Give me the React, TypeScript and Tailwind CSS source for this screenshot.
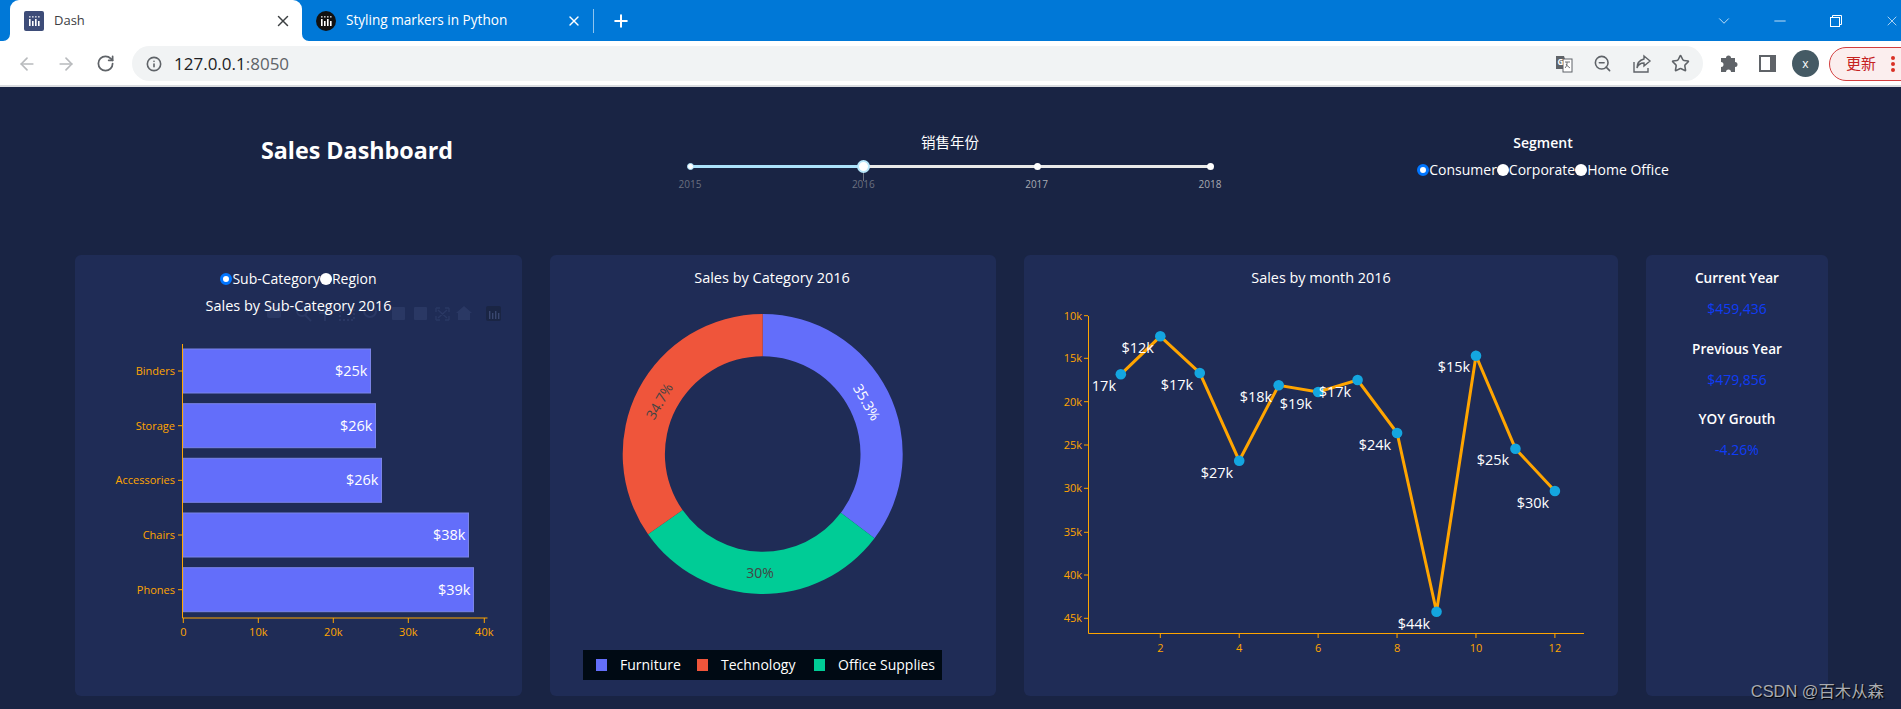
import React from "react";
import { ArrowLeft, ArrowRight, ChevronDown, Info, Minus, Plus, RotateCw, Star, X, ZoomOut } from "lucide-react";

const bars = [
  { name: "Binders", y: 349, right: 370.5, label: "$25k" },
  { name: "Storage", y: 403.7, right: 375.5, label: "$26k" },
  { name: "Accessories", y: 458.3, right: 381.5, label: "$26k" },
  { name: "Chairs", y: 513, right: 468.5, label: "$38k" },
  { name: "Phones", y: 567.7, right: 473.5, label: "$39k" },
];

const xTicks = [
  { x: 183.3, label: "0" },
  { x: 258.3, label: "10k" },
  { x: 333.3, label: "20k" },
  { x: 408.3, label: "30k" },
  { x: 484.3, label: "40k" },
];

const months = [
  { m: 1, y: 374.3, label: "17k", lx: 1091.8, ly: 390.5, start: true },
  { m: 2, y: 336.3, label: "$12k", lx: 1137.7, ly: 352.5 },
  { m: 3, y: 373, label: "$17k", lx: 1177, ly: 389.5 },
  { m: 4, y: 460.7, label: "$27k", lx: 1217, ly: 477.5 },
  { m: 5, y: 385.3, label: "$18k", lx: 1256, ly: 401.5 },
  { m: 6, y: 392, label: "$19k", lx: 1296, ly: 408.5 },
  { m: 7, y: 380, label: "$17k", lx: 1335, ly: 396.5 },
  { m: 8, y: 433, label: "$24k", lx: 1375, ly: 449.5 },
  { m: 9, y: 611.7, label: "$44k", lx: 1414, ly: 629 },
  { m: 10, y: 355.7, label: "$15k", lx: 1454, ly: 372 },
  { m: 11, y: 448.7, label: "$25k", lx: 1493, ly: 465 },
  { m: 12, y: 491, label: "$30k", lx: 1533, ly: 508 },
];

const monthX = (m: number) => 1160.3 + (m - 2) * 39.46;

const yTicks = [
  { y: 315.7, label: "10k" },
  { y: 358.3, label: "15k" },
  { y: 401.7, label: "20k" },
  { y: 445, label: "25k" },
  { y: 488.3, label: "30k" },
  { y: 532.3, label: "35k" },
  { y: 575, label: "40k" },
  { y: 618.3, label: "45k" },
];

const kpis = [
  { title: "Current Year", value: "$459,436" },
  { title: "Previous Year", value: "$479,856" },
  { title: "YOY Grouth", value: "-4.26%" },
];

function arc(r0: number, r1: number, from: number, to: number) {
  const cx = 762.7;
  const cy = 454;
  const pt = (r: number, a: number) => {
    const t = (a * Math.PI) / 180;
    return `${(cx + r * Math.sin(t)).toFixed(2)} ${(cy - r * Math.cos(t)).toFixed(2)}`;
  };
  const large = to - from > 180 ? 1 : 0;
  return `M${pt(r1, from)} A${r1} ${r1} 0 ${large} 1 ${pt(r1, to)} L${pt(r0, to)} A${r0} ${r0} 0 ${large} 0 ${pt(r0, from)} Z`;
}

function PlotlyBars({ color = "#fff" }: { color?: string }) {
  return (
    <g fill={color}>
      <rect x="5" y="8" width="1.6" height="7" />
      <rect x="8" y="10" width="1.6" height="5" />
      <rect x="11" y="8" width="1.6" height="7" />
      <rect x="14" y="10" width="1.6" height="5" />
      <rect x="5" y="5" width="1.6" height="1.6" opacity=".7" />
      <rect x="8" y="5" width="1.6" height="1.6" opacity=".7" />
      <rect x="11" y="5" width="1.6" height="1.6" opacity=".7" />
      <rect x="14" y="5" width="1.6" height="1.6" opacity=".7" />
    </g>
  );
}

function Radio({ checked, label }: { checked?: boolean; label: string }) {
  return (
    <label className="flex items-center">
      <span
        className={
          checked
            ? "w-[12px] h-[12px] rounded-full bg-white border-[3px] border-[#0075ff]"
            : "w-[12px] h-[12px] rounded-full bg-white"
        }
      />
      <span>{label}</span>
    </label>
  );
}

function BrowserBar() {
  return (
    <div className="flex flex-col bg-white">
      <div className="flex items-center h-[41px] bg-[#0078d7] text-[13px]">
        <div className="relative flex items-center ml-[10px] w-[292px] h-[41px] shrink-0 bg-white rounded-t-[9px] text-[#3c4043]">
          <svg className="absolute left-[-7px] bottom-0 w-[7px] h-[7px]" viewBox="0 0 7 7">
            <path d="M7 0v7H0a7 7 0 0 0 7-7z" fill="#fff" />
          </svg>
          <svg className="absolute right-[-7px] bottom-0 w-[7px] h-[7px]" viewBox="0 0 7 7">
            <path d="M0 0v7h7a7 7 0 0 1-7-7z" fill="#fff" />
          </svg>
          <svg className="ml-[14px] w-[20px] h-[20px]" viewBox="0 0 20 20">
            <rect width="20" height="20" rx="2" fill="#3d4c78" />
            <PlotlyBars />
          </svg>
          <span className="ml-[10px]">Dash</span>
          <X className="ml-auto mr-[10px] w-[18px] h-[18px] text-[#3c4043]" strokeWidth={2} />
        </div>
        <div className="flex items-center w-[292px] h-[41px] shrink-0 text-white text-[13.6px]">
          <svg className="ml-[14px] w-[20px] h-[20px]" viewBox="0 0 20 20">
            <circle cx="10" cy="10" r="10" fill="#111" />
            <PlotlyBars />
          </svg>
          <span className="ml-[10px]">Styling markers in Python</span>
          <X className="ml-auto mr-[11px] w-[16px] h-[16px]" strokeWidth={2} />
          <span className="w-px h-[24px] bg-[#8fc4ee]" />
        </div>
        <Plus className="ml-[17px] w-[20px] h-[20px] shrink-0 text-white" strokeWidth={2.4} />
        <ChevronDown className="ml-[1084px] w-[18px] h-[18px] shrink-0 text-white" strokeWidth={1} />
        <Minus className="ml-[38px] w-[18px] h-[18px] shrink-0 text-white" strokeWidth={1} />
        <svg className="ml-[41px] w-[12px] h-[12px] shrink-0" viewBox="0 0 12 12" fill="none" stroke="#fff">
          <rect x=".5" y="2.5" width="9" height="9" />
          <path d="M2.5 2.5v-2h9v9h-2" />
        </svg>
        <X className="ml-[42px] w-[16px] h-[16px] text-white shrink-0" strokeWidth={1} />
      </div>
      <div className="flex items-center h-[44px] pt-px">
        <ArrowLeft className="ml-[17px] w-[20px] h-[20px] shrink-0 text-[#b8babd]" strokeWidth={2} />
        <ArrowRight className="ml-[19px] w-[20px] h-[20px] shrink-0 text-[#b8babd]" strokeWidth={2} />
        <RotateCw className="ml-[20px] w-[19px] h-[19px] shrink-0 text-[#5f6368]" strokeWidth={2.2} />
        <div className="flex items-center ml-[17px] w-[1571px] h-[35px] shrink-0 rounded-full bg-[#f1f3f4]">
          <Info className="ml-[14px] w-[16px] h-[16px] text-[#5f6368]" strokeWidth={2.4} />
          <span className="ml-[12px] text-[17px] text-[#202124]">
            127.0.0.1<span className="text-[#5f6368]">:8050</span>
          </span>
          <svg className="ml-auto w-[18px] h-[18px]" viewBox="0 0 18 18">
            <path d="M1 1h8l1 3h0v10H1z" fill="#5f6368" />
            <rect x="8" y="4" width="9" height="13" fill="#fff" stroke="#5f6368" />
            <text x="2.5" y="10" fontSize="8" fontWeight="700" fill="#fff">G</text>
            <path d="M10 7h5M12 7c.4 3-1 5-2 6M11 9c1 2 3 3 4 4" stroke="#5f6368" fill="none" strokeWidth=".9" />
          </svg>
          <ZoomOut className="ml-[20px] w-[19px] h-[19px] text-[#5f6368]" strokeWidth={2} />
          <svg className="ml-[21px] w-[19px] h-[19px]" viewBox="0 0 19 19" fill="none" stroke="#5f6368" strokeWidth="1.4">
            <path d="M1 8v10h14v-4" />
            <path d="M11 2l6 5-6 5V9C7 9 5 11 4 14c0-5 3-8 7-9z" />
          </svg>
          <Star className="ml-[19px] mr-[13px] w-[19px] h-[19px] text-[#5f6368]" strokeWidth={2} />
        </div>
        <svg className="ml-[17px] w-[18px] h-[18px] shrink-0" viewBox="0 0 18 18" fill="#5f6368">
          <path d="M6 3a2.5 2.5 0 0 1 5 0h4v4a2.5 2.5 0 0 1 0 5v5h-4a2.5 2.5 0 0 0-5 0H1v-5a2.5 2.5 0 0 0 0-5V3z" />
        </svg>
        <svg className="ml-[21px] w-[17px] h-[17px] shrink-0" viewBox="0 0 17 17">
          <rect x="1" y="1" width="15" height="15" fill="none" stroke="#5f6368" strokeWidth="2" />
          <rect x="11" y="1" width="5" height="15" fill="#5f6368" />
        </svg>
        <span className="flex items-center justify-center ml-[16px] w-[27px] h-[27px] shrink-0 rounded-full bg-[#455a64] text-white text-[12px]">
          x
        </span>
        <div className="flex items-center ml-[10px] w-[90px] h-[34px] pl-[16px] rounded-full border border-[#d33f3f] bg-[#fbeeee] text-[#c5221f] text-[15px] shrink-0">
          <span>更新</span>
          <span className="flex flex-col gap-[2px] ml-[15px]">
            <span className="w-[4px] h-[4px] rounded-full bg-[#d93025]" />
            <span className="w-[4px] h-[4px] rounded-full bg-[#d93025]" />
            <span className="w-[4px] h-[4px] rounded-full bg-[#d93025]" />
          </span>
        </div>
      </div>
      <div className="h-[2px] bg-[#dadce0]" />
    </div>
  );
}

function YearSlider() {
  return (
    <div className="flex flex-col items-center w-[622px] pt-[46px]">
      <div className="text-[14.5px] leading-[20px]">销售年份</div>
      <div className="relative w-[520px] h-[3px] mt-[12px] bg-[#e9e9e9]">
        <div className="absolute left-0 top-0 w-1/3 h-[3px] bg-[#abe2fb]" />
        <span className="absolute left-0 top-[-2px] -ml-[3px] w-[7px] h-[7px] rounded-full bg-white border border-[#abe2fb]" />
        <span className="absolute left-[33.33%] top-[7px] w-px h-[9px] bg-[#6b7080]" />
        <span className="absolute left-[33.33%] top-[-5px] -ml-[6px] w-[13px] h-[13px] rounded-full bg-white border-2 border-[#b9e8fb]" />
        <span className="absolute left-[66.66%] top-[-2px] -ml-[3px] w-[7px] h-[7px] rounded-full bg-white" />
        <span className="absolute left-full top-[-2px] -ml-[3px] w-[7px] h-[7px] rounded-full bg-white" />
        <span className="absolute left-0 top-[12px] -translate-x-1/2 text-[10px] text-[#6b7080]">2015</span>
        <span className="absolute left-[33.33%] top-[12px] -translate-x-1/2 text-[10px] text-[#6b7080]">2016</span>
        <span className="absolute left-[66.66%] top-[12px] -translate-x-1/2 text-[10px] text-[#a8abb3]">2017</span>
        <span className="absolute left-full top-[12px] -translate-x-1/2 text-[10px] text-[#a8abb3]">2018</span>
      </div>
    </div>
  );
}

function SubCategoryCard() {
  return (
    <div className="flex flex-col w-[447px] rounded-[6px] bg-[#1f2c56]">
      <div className="flex justify-center pt-[14px] h-[34px] text-[14px] leading-[20px]">
        <Radio checked label="Sub-Category" />
        <Radio label="Region" />
      </div>
      <svg className="w-[447px] h-[407px]" viewBox="75 289 447 407">
        <g fill="#2a3864">
          <rect x="267" y="307" width="14" height="11" rx="2" />
          <circle cx="302" cy="311" r="5" fill="none" stroke="#2a3864" strokeWidth="2" />
          <path d="M305 315l6 6" stroke="#2a3864" strokeWidth="2" />
          <path d="M325 306v15M319 313h12" stroke="#2a3864" strokeWidth="2" />
          <rect x="340" y="307" width="14" height="13" fill="none" stroke="#2a3864" strokeWidth="2" strokeDasharray="2 2" />
          <circle cx="370" cy="311" r="6" fill="none" stroke="#2a3864" strokeWidth="2" />
          <rect x="392" y="307" width="13" height="13" rx="1" />
          <rect x="414" y="307" width="13" height="13" rx="1" />
          <path d="M436 308h4M436 308v4M449 308h-4M449 308v4M436 320h4M436 320v-4M449 320h-4M449 320v-4M438 310l9 8M447 310l-9 8" stroke="#2a3864" fill="none" strokeWidth="1.4" />
          <path d="M464 306l8 7h-2v7h-12v-7h-2z" />
        </g>
        <rect x="486" y="306" width="15" height="15" rx="2" fill="#1a2544" />
        <g fill="#39466f">
          <rect x="489" y="311" width="1.4" height="8" />
          <rect x="492" y="313" width="1.4" height="6" />
          <rect x="495" y="311" width="1.4" height="8" />
          <rect x="498" y="313" width="1.4" height="6" />
        </g>
        <text x="298.5" y="310.5" textAnchor="middle" fontSize="14.5" fill="#fff">
          Sales by Sub-Category 2016
        </text>
        {bars.map((b) => (
          <g key={b.name}>
            <rect x="183" y={b.y} width={b.right - 183} height="44" fill="#636efa" stroke="#7a84e8" strokeWidth="1" />
            <text x={b.right - 3} y={b.y + 27} textAnchor="end" fontSize="14.5" fill="#fff">
              {b.label}
            </text>
            <path d={`M178 ${b.y + 22}h4`} stroke="#ffa500" />
            <text x="175" y={b.y + 26} textAnchor="end" fontSize="11" fill="#ffa500">
              {b.name}
            </text>
          </g>
        ))}
        <path d="M182.5 344V618H487.5" fill="none" stroke="#ffa500" />
        {xTicks.map((t) => (
          <g key={t.label}>
            <path d={`M${t.x} 618v5`} stroke="#ffa500" />
            <text x={t.x} y="636" textAnchor="middle" fontSize="11" fill="#ffa500">
              {t.label}
            </text>
          </g>
        ))}
      </svg>
    </div>
  );
}

function CategoryCard() {
  return (
    <div className="w-[446px] rounded-[6px] bg-[#1f2c56]">
      <svg className="w-[446px] h-[441px]" viewBox="550 255 446 441">
        <text x="772" y="283" textAnchor="middle" fontSize="14.5" fill="#fff">
          Sales by Category 2016
        </text>
        <path d={arc(97.8, 140, 0, 127)} fill="#636efa" />
        <path d={arc(97.8, 140, 127, 235)} fill="#00cc96" />
        <path d={arc(97.8, 140, 235, 360)} fill="#ef553b" />
        <text x="866" y="407" textAnchor="middle" fontSize="14" fill="#fff" transform="rotate(60 866 402.7)">
          35.3%
        </text>
        <text x="660" y="406" textAnchor="middle" fontSize="14" fill="#444" transform="rotate(-60 660 401.7)">
          34.7%
        </text>
        <text x="760" y="578" textAnchor="middle" fontSize="14" fill="#444">
          30%
        </text>
        <rect x="583" y="650" width="359" height="30" fill="#000a14" />
        <rect x="596" y="659" width="11" height="12" fill="#636efa" />
        <text x="620" y="670" fontSize="14" fill="#fff">Furniture</text>
        <rect x="697" y="659" width="11" height="12" fill="#ef553b" />
        <text x="721" y="670" fontSize="14" fill="#fff">Technology</text>
        <rect x="814" y="659" width="11" height="12" fill="#00cc96" />
        <text x="838" y="670" fontSize="14" fill="#fff">Office Supplies</text>
      </svg>
    </div>
  );
}

function MonthCard() {
  const line = months.map((p) => `${monthX(p.m).toFixed(1)},${p.y}`).join(" ");
  return (
    <div className="w-[594px] rounded-[6px] bg-[#1f2c56]">
      <svg className="w-[594px] h-[441px]" viewBox="1024 255 594 441">
        <text x="1321" y="283" textAnchor="middle" fontSize="14.4" fill="#fff">
          Sales by month 2016
        </text>
        <path d="M1088.5 316V633.5H1584" fill="none" stroke="#ffa500" />
        {yTicks.map((t) => (
          <g key={t.label}>
            <path d={`M1084 ${t.y}h4`} stroke="#ffa500" />
            <text x="1082" y={t.y + 4} textAnchor="end" fontSize="11" fill="#ffa500">
              {t.label}
            </text>
          </g>
        ))}
        {[2, 4, 6, 8, 10, 12].map((m) => (
          <g key={m}>
            <path d={`M${monthX(m)} 633v5`} stroke="#ffa500" />
            <text x={monthX(m)} y="652" textAnchor="middle" fontSize="11" fill="#ffa500">
              {m}
            </text>
          </g>
        ))}
        <polyline points={line} fill="none" stroke="#ffa500" strokeWidth="3" />
        {months.map((p) => (
          <circle key={p.m} cx={monthX(p.m)} cy={p.y} r="5.3" fill="#14a6e0" />
        ))}
        {months.map((p) => (
          <text key={p.m} x={p.lx} y={p.ly} textAnchor={p.start ? "start" : "middle"} fontSize="14.5" fill="#fff">
            {p.label}
          </text>
        ))}
      </svg>
    </div>
  );
}

function KpiCard() {
  return (
    <div className="flex flex-col items-center w-[182px] pt-[13px] rounded-[6px] bg-[#1f2c56]">
      {kpis.map((k) => (
        <div key={k.title} className="flex flex-col items-center h-[70.5px]">
          <div className="text-[13.6px] leading-[20px] font-semibold">{k.title}</div>
          <div className="mt-[11px] text-[14px] leading-[20px] text-[#0f3cf5]">{k.value}</div>
        </div>
      ))}
    </div>
  );
}

export default function App() {
  return (
    <div className="relative h-[709px] overflow-hidden bg-[#192444] text-white font-['Open_Sans','Noto_Sans_CJK_SC',sans-serif]">
      <BrowserBar />
      <div className="flex h-[168px]">
        <div className="flex justify-center w-[639px] pl-[75px] pt-[46px] text-[23.3px] leading-[34px] font-bold">
          Sales Dashboard
        </div>
        <YearSlider />
        <div className="flex flex-col items-center w-[564px] pt-[46px] text-[14px] leading-[20px]">
          <div className="font-semibold">Segment</div>
          <div className="flex mt-[7px]">
            <Radio checked label="Consumer" />
            <Radio label="Corporate" />
            <Radio label="Home Office" />
          </div>
        </div>
      </div>
      <div className="flex gap-[28px] pl-[75px] h-[441px]">
        <SubCategoryCard />
        <CategoryCard />
        <MonthCard />
        <KpiCard />
      </div>
      <div className="absolute right-[17px] bottom-[5px] text-[16.4px] text-[#a9abb0] [text-shadow:1px_1px_1px_#000] font-['Liberation_Sans','Noto_Sans_CJK_SC',sans-serif]">
        CSDN @百木从森
      </div>
    </div>
  );
}
